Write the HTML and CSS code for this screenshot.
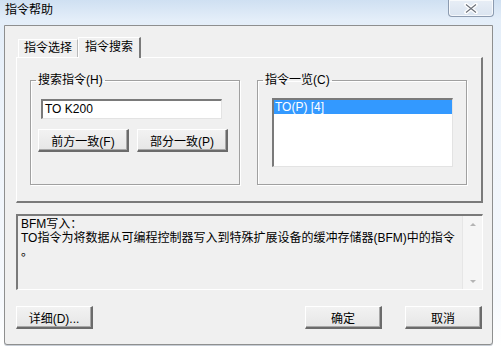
FILE: index.html
```html
<!DOCTYPE html>
<html lang="zh-CN">
<head>
    <meta charset="UTF-8">
    <title>指令帮助</title>
    <link rel="stylesheet" href="styles.css">
</head>
<body>
    <div class="window">
        <div class="titlebar">
            <span class="title">指令帮助</span>
            <span class="close-btn">
                <svg width="16" height="11" viewBox="0 0 16 11">
                    <path d="M3 1.5 L13 9.5 M13 1.5 L3 9.5" stroke="#fff" stroke-width="3.6" stroke-linecap="round"/>
                    <path d="M3 1.5 L13 9.5 M13 1.5 L3 9.5" stroke="#6a6f78" stroke-width="1.1"/>
                </svg>
            </span>
        </div>

        <div class="client">
            <div class="tabs">
                <div class="tab-head">
                    <span class="tab">指令选择</span>
                    <span class="tab active">指令搜索</span>
                </div>
                <div class="tab-panel">
                    <fieldset class="group">
                        <legend>搜索指令(H)</legend>
                        <div class="edit">TO K200</div>
                        <div class="btn-row">
                            <button class="btn">前方一致(F)</button>
                            <button class="btn">部分一致(P)</button>
                        </div>
                    </fieldset>
                    <fieldset class="group">
                        <legend>指令一览(C)</legend>
                        <div class="listbox">
                            <div class="list-item selected">TO(P) [4]</div>
                        </div>
                    </fieldset>
                </div>
            </div>

            <div class="memo">
                <div class="memo-text">BFM写入：<br>TO指令为将数据从可编程控制器写入到特殊扩展设备的缓冲存储器(BFM)中的指令<br>。</div>
                <div class="scrollbar">
                    <span class="arrow up"></span>
                    <span class="arrow down"></span>
                </div>
            </div>

            <div class="footer">
                <button class="btn wide">详细(D)...</button>
                <div class="footer-right">
                    <button class="btn wide">确定</button>
                    <button class="btn wide">取消</button>
                </div>
            </div>
        </div>
    </div>
</body>
</html>
```

FILE: styles.css
```css
html, body {
    margin: 0;
    padding: 0;
}
body {
    width: 501px;
    height: 352px;
    overflow: hidden;
    font-family: "Liberation Sans", "Noto Sans CJK SC", sans-serif;
    font-size: 12px;
    color: #000;
    background: linear-gradient(to bottom, #cfe0f2 0px, #e4eef9 20px, #eef4fb 120px, #f6f9fd 300px, #ffffff 346px);
}
.window {
    display: flex;
    flex-direction: column;
    height: 352px;
}
.titlebar {
    height: 25px;
    display: flex;
    align-items: flex-start;
    justify-content: space-between;
    padding-left: 5px;
    padding-right: 7px;
}
.title {
    margin-top: 2px;
    font-size: 12px;
    line-height: 16px;
}
.close-btn {
    width: 44px;
    height: 16px;
    border: 1px solid #8c9bb0;
    border-top: none;
    border-radius: 0 0 4px 4px;
    background: linear-gradient(to bottom, #e8eef6, #dae4f0);
    box-shadow: inset 0 0 0 1px rgba(255, 255, 255, 0.7);
    display: flex;
    align-items: center;
    justify-content: center;
}
.client {
    margin-left: 4px;
    width: 489px;
    height: 320px;
    background-color: #f0f0f0;
    border: 1px solid #8e8f8f;
    border-radius: 0 0 3px 3px;
    box-shadow: 0 1px 0 #c8ced6;
    display: flex;
    flex-direction: column;
    padding: 0 9px 0 11px;
    box-sizing: border-box;
}

/* tab control */
.tabs {
    margin-top: 10px;
}
.tab-head {
    display: flex;
    align-items: flex-end;
    height: 21px;
    padding-left: 2px;
}
.tab {
    height: 17px;
    padding: 0 5px;
    line-height: 17px;
    background: #f0f0f0;
    border: 1px solid #fff;
    border-bottom: none;
    border-right: 1px solid #b9b9b9;
    font-size: 12px;
}
.tab.active {
    height: 20px;
    line-height: 19px;
    padding: 0 6px;
    border-right: 2px solid #7a7a7a;
    margin-bottom: -1px;
    position: relative;
    z-index: 1;
}
.tab-panel {
    height: 146px;
    box-sizing: border-box;
    border: 1px solid #fff;
    border-right: 2px solid #7a7a7a;
    border-bottom: 2px solid #7a7a7a;
    display: flex;
    gap: 17px;
    padding: 15px 0 0 13px;
}

/* group boxes */
.group {
    width: 210px;
    height: 112px;
    box-sizing: border-box;
    margin: 0;
    padding: 0;
    border: 1px solid #a0a0a0;
    box-shadow: inset 1px 1px 0 #fff, 1px 1px 0 #fff;
}
.group legend {
    padding: 0 2px;
    margin-left: 5px;
    font-size: 12px;
    line-height: 14px;
}
.edit {
    margin: 12px 0 0 10px;
    width: 181px;
    height: 20px;
    box-sizing: border-box;
    background: #fff;
    border: 1px solid #e3e3e3;
    border-top: 2px solid #7a7a7a;
    border-left: 2px solid #7a7a7a;
    padding: 1px 2px;
    line-height: 15px;
}
.btn-row {
    display: flex;
    gap: 8px;
    margin: 10px 0 0 7px;
}
.btn {
    height: 23px;
    width: 91px;
    box-sizing: border-box;
    padding: 0;
    font-family: "Liberation Sans", "Noto Sans CJK SC", sans-serif;
    font-size: 12px;
    color: #000;
    background: linear-gradient(to bottom, #f2f2f2, #e6e6e6);
    border: 1px solid #fff;
    border-right: 2px solid #6b6b6b;
    border-bottom: 2px solid #6b6b6b;
    box-shadow: inset -1px -1px 0 #a8a8a8;
}
.btn.wide {
    width: 77px;
}
.listbox {
    margin: 11px 0 0 14px;
    width: 181px;
    height: 69px;
    box-sizing: border-box;
    background: #fff;
    border: 1px solid #e3e3e3;
    border-top: 2px solid #7a7a7a;
    border-left: 2px solid #7a7a7a;
}
.list-item {
    height: 14px;
    line-height: 14px;
    padding-left: 1px;
}
.list-item.selected {
    background: #3399ff;
    color: #fff;
}

/* description memo */
.memo {
    margin-top: 11px;
    height: 76px;
    box-sizing: border-box;
    border: 1px solid #fff;
    border-top: 2px solid #7a7a7a;
    border-left: 2px solid #7a7a7a;
    display: flex;
}
.memo-text {
    flex: 1;
    padding: 1px 3px;
    line-height: 14px;
    font-size: 12px;
}
.scrollbar {
    width: 19px;
    background: #f5f5f5;
    border-left: 1px solid #e6e6e6;
    display: flex;
    flex-direction: column;
    justify-content: space-between;
    align-items: center;
    padding: 7px 0 6px;
}
.arrow {
    width: 0;
    height: 0;
    border-left: 3px solid transparent;
    border-right: 3px solid transparent;
}
.arrow.up {
    border-bottom: 3px solid #b4b4b4;
}
.arrow.down {
    border-top: 3px solid #b4b4b4;
}

/* footer buttons */
.footer {
    margin-top: 16px;
    display: flex;
    justify-content: space-between;
    padding-right: 1px;
}
.footer-right {
    display: flex;
    gap: 23px;
}
```
